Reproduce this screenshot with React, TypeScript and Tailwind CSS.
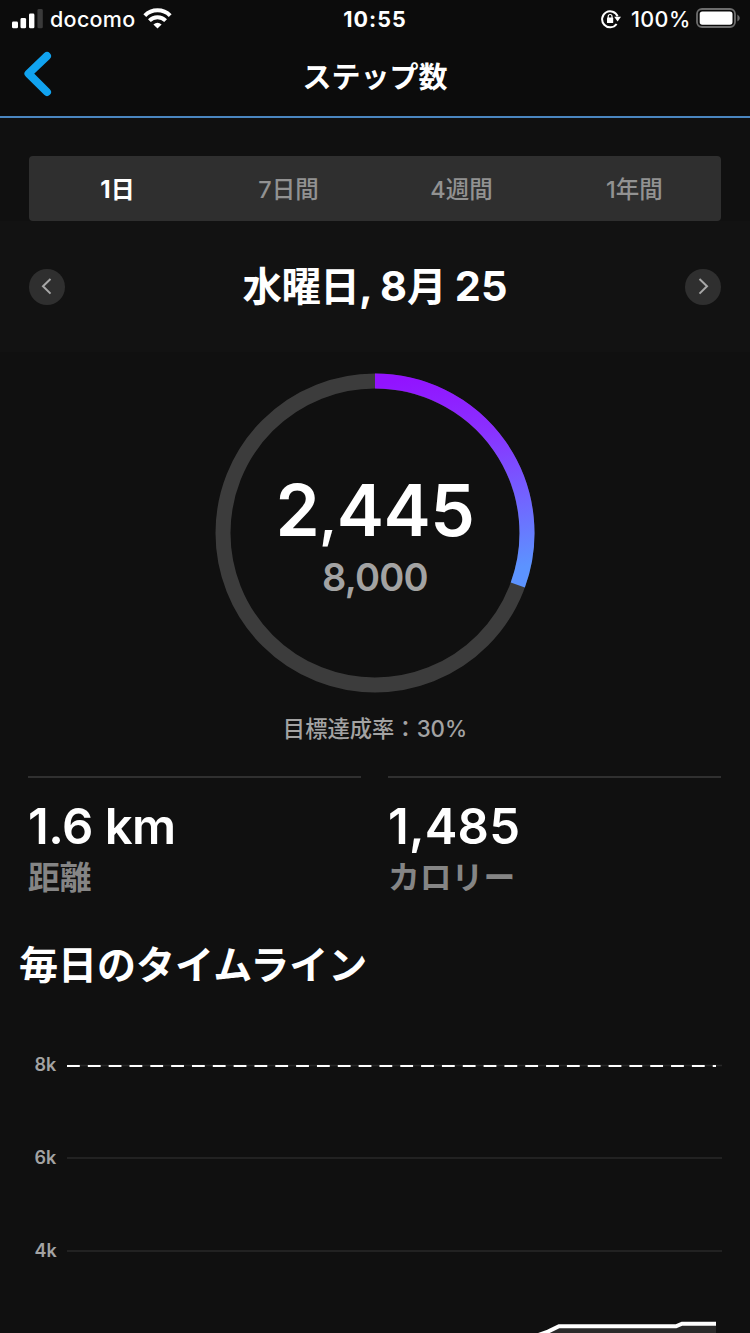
const tabs = ['1日', '7日間', '4週間', '1年間'];

const stats = [
  { value: '1.6 km', label: '距離', tracking: 'tracking-[-0.5px]' },
  { value: '1,485', label: 'カロリー', tracking: 'tracking-[0.2px]' },
];

function StatusBar() {
  return (
    <div className="grid grid-cols-3 h-[38px] items-center text-white text-[21px] leading-none">
      <div className="flex items-center pl-3">
        <svg className="w-[31px] h-[20px] shrink-0" viewBox="0 0 31 20">
          <rect x="0" y="12.5" width="6" height="6.8" rx="1.4" fill="#fff" />
          <rect x="8.5" y="9" width="5.6" height="10.3" rx="1.4" fill="#fff" />
          <rect x="17" y="4.5" width="5.4" height="14.8" rx="1.4" fill="#fff" />
          <rect x="25.4" y="0" width="5.4" height="19.3" rx="1.4" fill="#3a3a3a" />
        </svg>
        <span className="ml-[7px] w-[87px] pt-[2px] text-[21.5px] font-medium tracking-[0.3px]">docomo</span>
        <svg className="ml-[6px] -mt-[2px] w-[29px] h-[21px] shrink-0" viewBox="0 0 29 21" fill="none" stroke="#fff" strokeWidth="4">
          <path d="M1.8 7.6 A18 18 0 0 1 27.2 7.6" />
          <path d="M6.4 12.6 A11.6 11.6 0 0 1 22.6 12.6" />
          <path d="M10.4 16.4 A6.4 6.4 0 0 1 18.6 16.4 L14.5 20.6 Z" fill="#fff" stroke="none" />
        </svg>
      </div>
      <div className="pt-[2px] text-center text-[21.5px] font-bold tracking-[1px]">10:55</div>
      <div className="flex items-center justify-end pr-[10px]">
        <svg className="w-[20px] h-[20px] shrink-0" viewBox="0 0 20 20">
          <path d="M15.6 15 A8 8 0 1 1 16.6 7.4" fill="none" stroke="#fff" strokeWidth="2" />
          <path d="M13.2 7.8 H20 L16.6 12.4 Z" fill="#fff" />
          <rect x="6" y="8.6" width="6.2" height="5.4" rx="0.6" fill="#fff" />
          <path d="M7.2 9 V7.4 a1.9 1.9 0 0 1 3.8 0 V9" fill="none" stroke="#fff" strokeWidth="1.2" />
        </svg>
        <span className="ml-[10px] w-[61px] pt-[2px] text-[21.5px] font-medium tracking-[0.4px]">100%</span>
        <svg className="ml-[4px] -mt-[2px] w-[44px] h-[20px] shrink-0" viewBox="0 0 44 20">
          <rect x="1" y="1" width="38" height="18" rx="5" fill="none" stroke="#6d6d6d" strokeWidth="1.8" />
          <rect x="3.7" y="3.5" width="32.8" height="13.2" rx="2.6" fill="#fff" />
          <path d="M41.4 6.5 Q43.8 8 43.8 10 T41.4 13.5 Z" fill="#6d6d6d" />
        </svg>
      </div>
    </div>
  );
}

function Header() {
  return (
    <header className="h-[118px] bg-[#0c0c0c] border-b-2 border-[#4a86c0]">
      <StatusBar />
      <div className="grid grid-cols-3 h-[76px] items-center">
        <button className="pl-6 -mt-1">
          <svg className="w-[28px] h-[46px]" viewBox="0 0 28 46">
            <path d="M23 5 L4.5 22.6 L23 41" fill="none" stroke="#11a3f0" strokeWidth="8" strokeLinecap="round" strokeLinejoin="round" />
          </svg>
        </button>
        <h1 className="pt-[3px] text-center text-white text-[29px] leading-none font-bold whitespace-nowrap">ステップ数</h1>
      </div>
    </header>
  );
}

function ArrowButton({ d }: { d: string }) {
  return (
    <button className="w-[36px] h-[36px] rounded-full bg-[#2f2f2f] flex items-center justify-center">
      <svg className="w-[36px] h-[36px]" viewBox="0 0 36 36">
        <path d={d} fill="none" stroke="#a8a8a8" strokeWidth="2" />
      </svg>
    </button>
  );
}

function ProgressRing({ steps, goal }: { steps: number; goal: number }) {
  const angle = (steps / goal) * 2 * Math.PI;
  const x = 160 + 152 * Math.sin(angle);
  const y = 160 - 152 * Math.cos(angle);
  const [thousands, rest] = steps.toLocaleString('en-US').split(',');

  return (
    <div className="grid w-[320px] h-[320px] mx-auto">
      <svg className="col-start-1 row-start-1 w-[320px] h-[320px]" viewBox="0 0 320 320" fill="none" strokeWidth="15">
        <defs>
          <linearGradient id="ring" gradientUnits="userSpaceOnUse" x1="160" y1="0" x2="200" y2="214">
            <stop offset="0.05" stopColor="#9213ff" />
            <stop offset="0.35" stopColor="#8a30ff" />
            <stop offset="1" stopColor="#5c93ff" />
          </linearGradient>
        </defs>
        <circle cx="160" cy="160" r="152" stroke="#3c3c3c" />
        <path d={`M160 8 A152 152 0 0 1 ${x} ${y}`} stroke="url(#ring)" />
      </svg>
      <div className="col-start-1 row-start-1 flex flex-col items-center pt-[101px]">
        <div className="h-[72px] text-white text-[71px] leading-[72px] font-semibold tracking-[-0.5px]">
          {thousands}<span className="text-[56px] leading-none">,</span>{rest}
        </div>
        <div className="mt-[11px] text-[#a3a3a3] text-[38px] leading-[40px] font-semibold tracking-[-0.8px]">{goal.toLocaleString('en-US')}</div>
      </div>
    </div>
  );
}

function Timeline() {
  return (
    <svg className="block w-[750px] h-[333px]" viewBox="0 1000 750 333">
      <g fill="#a3a3a3" fontSize="18" fontWeight="600">
        <text x="34.5" y="1071">8k</text>
        <text x="34.5" y="1164">6k</text>
        <text x="34.5" y="1257">4k</text>
      </g>
      <g stroke="#282828" strokeWidth="1.4">
        <path d="M67 1065.5 H722" />
        <path d="M67 1158 H722" />
        <path d="M67 1251 H722" />
      </g>
      <path d="M67 1066 H716" stroke="#fff" strokeWidth="2.2" strokeDasharray="12.8 8.03" />
      <path d="M530 1337 L541 1333 L558 1326 H676 L682 1323.5 H716 V1340 H530 Z" fill="#2a2a2a" />
      <path d="M530 1338 L548 1331.6 L559 1326.3 H676 L682 1323.7 H716" fill="none" stroke="#fff" strokeWidth="4" />
    </svg>
  );
}

export default function App() {
  return (
    <main className="w-[750px] h-[1333px] overflow-hidden bg-[#101010] font-['Inter','Noto_Sans_CJK_JP',sans-serif]">
      <Header />

      <div className="h-[103px] pt-[38px] px-[29px]">
        <div className="grid grid-cols-4 h-[65px] pt-[3px] items-center rounded-[4px] bg-[#2f2f2f] text-[23.5px] leading-none text-center">
          {tabs.map((tab, i) => (
            <button key={tab} className={i === 0 ? 'pl-1 text-[24px] text-white font-bold' : 'text-[#929292] font-medium'}>
              {tab}
            </button>
          ))}
        </div>
      </div>

      <section className="h-[131px] px-[29px] bg-[#121212] flex items-center justify-between">
        <ArrowButton d="M21.5 10 L14 17.3 L21.5 24.6" />
        <h2 className="text-white text-[41.5px] leading-none font-bold whitespace-nowrap [word-spacing:-1.5px]">
          <span className="text-[39.5px] tracking-[-0.7px]">水曜日</span>, 8<span className="text-[39.5px]">月</span> 25
        </h2>
        <ArrowButton d="M14.5 10 L22 17.3 L14.5 24.6" />
      </section>

      <section className="h-[424px] pt-[21px]">
        <ProgressRing steps={2445} goal={8000} />
        <p className="mt-[24px] text-center text-[#a3a3a3] text-[22.3px] leading-[24px] font-medium">目標達成率：30%</p>
      </section>

      <section className="grid grid-cols-2 gap-[27px] h-[149px] pl-[28px] pr-[29px]">
        {stats.map((stat) => (
          <div key={stat.label} className="border-t-2 border-[#303030] pt-[23px]">
            <div className={`text-white text-[49px] leading-[52px] font-semibold ${stat.tracking}`}>{stat.value}</div>
            <div className="mt-[7px] text-[#858585] text-[31.8px] leading-[36px] font-semibold">{stat.label}</div>
          </div>
        ))}
      </section>

      <h2 className="h-[75px] pt-[20px] pl-[19px] text-white text-[39px] leading-[40px] font-bold">毎日のタイムライン</h2>
      <Timeline />
    </main>
  );
}
